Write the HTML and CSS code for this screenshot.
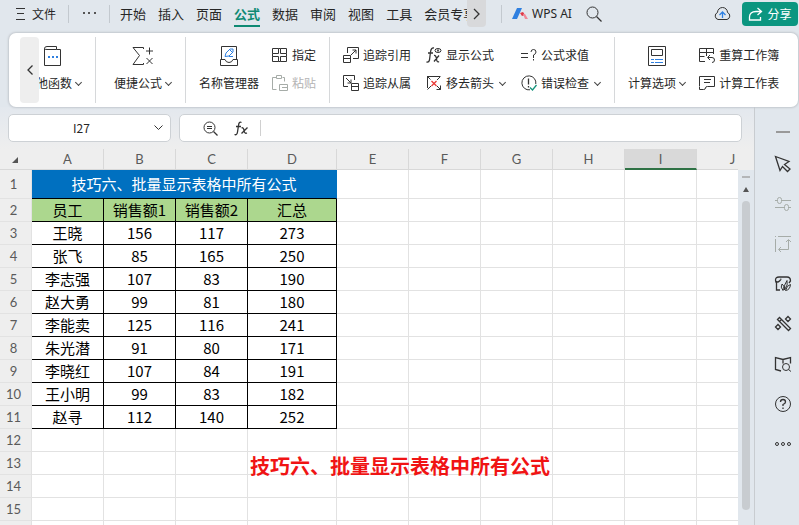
FILE: index.html
```
<!DOCTYPE html>
<html lang="zh-CN">
	<head>
		<meta charset="utf-8" />
		<meta name="viewport" content="width=device-width, initial-scale=1.0" />
		<title>WPS 表格</title>
		<link rel="stylesheet" href="styles.css">
	</head>
	<body>
		<header class="topbar">
			<button class="file">
				<svg width="9" height="12" viewBox="0 0 9 12"><path d="M0 .5h9M1 5.5h7M0 11.5h9" /></svg>
				<span>文件</span>
			</button>
			<span class="divider"></span>
			<button class="more" aria-label="更多">
				<svg width="13" height="3" viewBox="0 0 13 3"><path class="solid" d="M0 0h2v2H0zM5 0h2v2H5zM11 0h2v2h-2z" /></svg>
			</button>
			<span class="divider"></span>
			<nav class="tabs">
				<a href="#">开始</a>
				<a href="#">插入</a>
				<a href="#">页面</a>
				<a href="#" class="active">公式</a>
				<a href="#">数据</a>
				<a href="#">审阅</a>
				<a href="#">视图</a>
				<a href="#">工具</a>
				<a href="#">会员专享</a>
			</nav>
			<button class="tabs-next" aria-label="下一个">
				<svg width="7" height="12" viewBox="0 0 7 12"><path class="bold" d="M1 1l5 5-5 5" /></svg>
			</button>
			<span class="divider"></span>
			<button class="ai">
				<svg width="16" height="12" viewBox="0 0 16 12">
					<path class="solid-blue" d="M5 0h5L5 11H0z" />
					<path class="solid-red" d="M8 5l3-1 2 3-3 1z" />
					<path class="solid-pink" d="M11 6l2 0 3 5h-3z" />
				</svg>
				<span>WPS AI</span>
			</button>
			<button class="search" aria-label="搜索">
				<svg width="16" height="16" viewBox="0 0 16 16"><circle cx="6.5" cy="6.5" r="5.5" /><path class="bold" d="M10.500 10.500l5 5" /></svg>
			</button>
			<button class="cloud" aria-label="云同步">
				<svg width="17" height="14" viewBox="0 0 17 14">
					<path d="M4 12.500A3.700 3.700 0 0 1 3.500 5.500 5 5 0 0 1 13.500 5.500 3.700 3.700 0 0 1 13 12.500z" />
					<path class="blue bold" d="M8.500 11V6M5.500 8l3-3 3 3" />
				</svg>
			</button>
			<button class="share">
				<svg width="15" height="14" viewBox="0 0 15 14"><path class="bold" d="M9.500 1l4 3.500-4 3.500M13 4.500H8Q1.500 4.500 1.500 10M1.500 10v3h11v-3" /></svg>
				<span>分享</span>
			</button>
		</header>

		<section class="ribbon">
			<button class="ribbon-prev" aria-label="向左滚动">
				<svg width="6" height="10" viewBox="0 0 6 10"><path class="bold" d="M5.500.5L1 5l4.500 4.500" /></svg>
			</button>
			<div class="group first">
				<button class="tool-big">
					<svg width="20" height="20" viewBox="0 0 20 20">
						<path d="M1.500 2.500V19.500H17.500V3.500H13.500V.5H4Q1.500.5 1.500 2.500 1.500 3.500 4 3.500H13.500" />
						<path class="solid-blue" d="M5 10h2v2H5zM9 10h2v2H9zM13 10h2v2h-2z" />
					</svg>
					<span class="caret">其他函数</span>
				</button>
			</div>
			<div class="group second">
				<button class="tool-big">
					<svg width="20" height="20" viewBox="0 0 20 20">
						<path d="M10.500 3V1.500H0L6.500 9.500 0 18.500H10.500V17M16.500 1.500v7M13 5h7M13.500 12l6 6M19.500 12l-6 6" />
					</svg>
					<span class="caret">便捷公式</span>
				</button>
			</div>
			<div class="group">
				<button class="tool-big">
					<svg width="20" height="20" viewBox="0 0 20 20">
						<path d="M2.500 13.500V.5H17.500V13.500M1.500 13.500H6Q7 16.500 10 16.500T14 13.500H18.500V19.500H1.500z" />
						<path class="blue" d="M6 10.500l1-3.500 4-4h3v3l-4 4zM11 4l2 2M10 10.500h4" />
					</svg>
					<span>名称管理器</span>
				</button>
				<div class="tool-grid">
					<button class="tool">
						<svg width="16" height="16" viewBox="0 0 16 16">
							<path d="M.5 1.500h6v5h-6zM8.500 1.500h6v5h-6zM.5 9.500h6v5h-6zM6.500 1.500h2M.5 6.500v3M8.500 9.500h6v5h-6zM6.500 14.500h2M14.500 6.500v3" />
						</svg>
						<span>指定</span>
					</button>
					<button class="tool" disabled>
						<svg width="16" height="16" viewBox="0 0 16 16">
							<path d="M4.500 2.500H.5v12h4M10.500 2.500h2v4M4.500.5h5v3h-5zM7.500 9.500h8v6h-8zM10 12.500h5" />
						</svg>
						<span>粘贴</span>
					</button>
				</div>
			</div>
			<div class="group">
				<div class="tool-grid three">
					<button class="tool">
						<svg width="16" height="16" viewBox="0 0 16 16">
							<path d="M4.500 6V.5h11v11H10M.5 8.500h7v7h-7zM.5 11.500h7M8 8l5-5M9.500 3H13v3.500" />
						</svg>
						<span>追踪引用</span>
					</button>
					<button class="tool">
						<svg width="16" height="16" viewBox="0 0 16 16">
							<path class="bold" d="M8 1Q5 .5 4.500 5L3.500 13Q3 15.500.5 15M2 6h5M8 8.500Q10 8 10.500 12T13 14.500M13 8.500L8 14.500" />
							<ellipse cx="12" cy="3.500" rx="3" ry="2" /><path class="solid" d="M11 2.500h2v2h-2z" />
						</svg>
						<span>显示公式</span>
					</button>
					<button class="tool">
						<svg width="16" height="16" viewBox="0 0 16 16">
							<path d="M0 6.500h7M0 10.500h7M10 5Q10 2.500 12.500 2.500T15 5Q15 7 12.500 8V11M12.500 12v1.500" />
						</svg>
						<span>公式求值</span>
					</button>
					<button class="tool">
						<svg width="16" height="16" viewBox="0 0 16 16">
							<path d="M5 11.500H.5V.5h11V5M8.500 8.500h7v7h-7zM8.500 11.500h7M3 3l5 5M8 4.500V8H4.500" />
						</svg>
						<span>追踪从属</span>
					</button>
					<button class="tool">
						<svg width="16" height="16" viewBox="0 0 16 16">
							<path d="M1.500 13V1.500H14M1 1l3.500 3.500M14.500 1.500L11 5M1.500 14.500L5 11M11 11l3.500 3.500M14.500 10.500v4H10.500" />
							<path class="red bold" d="M5.500 6l5 5M10.500 6l-5 5" />
						</svg>
						<span class="caret">移去箭头</span>
					</button>
					<button class="tool">
						<svg width="16" height="16" viewBox="0 0 16 16">
							<path d="M9 14.800A7 7 0 1 1 14.800 9" />
							<path class="bold" d="M7.500 3.500v6M7.500 11v1.500" />
							<path class="green bold" d="M9 12.500l2.500 2.500 4-5" />
						</svg>
						<span class="caret">错误检查</span>
					</button>
				</div>
			</div>
			<div class="group">
				<button class="tool-big">
					<svg width="20" height="20" viewBox="0 0 20 20">
						<path d="M1.500.5h17v19h-17zM4.500 3.500h11v6h-11z" />
						<path class="blue" d="M4 13.500h3M8 13.500h8M4 16.500h3M8 16.500h8" />
					</svg>
					<span class="caret">计算选项</span>
				</button>
				<div class="tool-grid">
					<button class="tool">
						<svg width="16" height="16" viewBox="0 0 16 16">
							<path d="M6 14.500H.5v-13h14V7M.5 5.500h14M7.500 1.500V9M.5 9.500h5M9 10.500h4q2.500 0 2.500 2.500T13 15.500M11 8L8.500 10.500 11 13" />
						</svg>
						<span>重算工作簿</span>
					</button>
					<button class="tool">
						<svg width="16" height="16" viewBox="0 0 16 16">
							<path d="M.5 11V1.500h15v10H8.500Q6.500 11.500 6.500 13T4.500 14.500H.5V11.500M5 4.500h7M5 7.500h6" />
						</svg>
						<span>计算工作表</span>
					</button>
				</div>
			</div>
		</section>

		<main class="workspace">
			<div class="editor">
				<div class="formula-bar">
					<div class="name-box">
						<input type="text" value="I27" aria-label="名称框" />
						<svg width="9" height="6" viewBox="0 0 9 6"><path d="M.5.5l4 4 4-4" /></svg>
					</div>
					<div class="formula-box">
						<button aria-label="缩小">
							<svg width="15" height="15" viewBox="0 0 15 15"><circle cx="6.500" cy="6.500" r="5.500" /><path class="bold" d="M10.500 10.500l4 4" /><path d="M4 5.500h5M4 7.500h5" /></svg>
						</button>
						<button aria-label="插入函数">
							<svg width="14" height="15" viewBox="0 0 14 15"><path class="bold" d="M7.500 1.500Q5 0 4.500 4.500L3.500 11Q3 14.500.5 13.500M2 5.500h5M7.500 7q2-1 2.500 2.500t3 2.500M13.500 6.500l-6 6" /></svg>
						</button>
						<input type="text" aria-label="公式" />
					</div>
				</div>
				<div class="sheet-area">
					<div class="sheet">
						<table>
							<colgroup>
								<col class="col-index" /><col /><col /><col /><col class="col-wide" /><col /><col /><col /><col /><col /><col />
							</colgroup>
							<thead>
								<tr>
									<th class="corner"><svg width="6" height="6" viewBox="0 0 6 6"><path class="solid" d="M6 0v6H0z" /></svg></th>
									<th>A</th><th>B</th><th>C</th><th>D</th><th>E</th><th>F</th><th>G</th><th>H</th><th class="selected">I</th><th>J</th>
								</tr>
							</thead>
							<tbody>
								<tr class="title"><th>1</th><td colspan="4">技巧六、批量显示表格中所有公式</td><td></td><td></td><td></td><td></td><td></td><td></td></tr>
								<tr class="head"><th>2</th><td>员工</td><td>销售额1</td><td>销售额2</td><td>汇总</td><td></td><td></td><td></td><td></td><td></td><td></td></tr>
								<tr class="data"><th>3</th><td>王晓</td><td>156</td><td>117</td><td>273</td><td></td><td></td><td></td><td></td><td></td><td></td></tr>
								<tr class="data"><th>4</th><td>张飞</td><td>85</td><td>165</td><td>250</td><td></td><td></td><td></td><td></td><td></td><td></td></tr>
								<tr class="data"><th>5</th><td>李志强</td><td>107</td><td>83</td><td>190</td><td></td><td></td><td></td><td></td><td></td><td></td></tr>
								<tr class="data"><th>6</th><td>赵大勇</td><td>99</td><td>81</td><td>180</td><td></td><td></td><td></td><td></td><td></td><td></td></tr>
								<tr class="data"><th>7</th><td>李能卖</td><td>125</td><td>116</td><td>241</td><td></td><td></td><td></td><td></td><td></td><td></td></tr>
								<tr class="data"><th>8</th><td>朱光潜</td><td>91</td><td>80</td><td>171</td><td></td><td></td><td></td><td></td><td></td><td></td></tr>
								<tr class="data"><th>9</th><td>李晓红</td><td>107</td><td>84</td><td>191</td><td></td><td></td><td></td><td></td><td></td><td></td></tr>
								<tr class="data"><th>10</th><td>王小明</td><td>99</td><td>83</td><td>182</td><td></td><td></td><td></td><td></td><td></td><td></td></tr>
								<tr class="data"><th>11</th><td>赵寻</td><td>112</td><td>140</td><td>252</td><td></td><td></td><td></td><td></td><td></td><td></td></tr>
								<tr><th>12</th><td></td><td></td><td></td><td></td><td></td><td></td><td></td><td></td><td></td><td></td></tr>
								<tr><th>13</th><td></td><td></td><td></td><td></td><td></td><td></td><td></td><td></td><td></td><td></td></tr>
								<tr><th>14</th><td></td><td></td><td></td><td></td><td></td><td></td><td></td><td></td><td></td><td></td></tr>
								<tr><th>15</th><td></td><td></td><td></td><td></td><td></td><td></td><td></td><td></td><td></td><td></td></tr>
								<tr><th></th><td></td><td></td><td></td><td></td><td></td><td></td><td></td><td></td><td></td><td></td></tr>
							</tbody>
						</table>
						<p class="subtitle">技巧六、批量显示表格中所有公式</p>
					</div>
					<div class="scrollbar">
						<span class="split"></span>
						<svg width="6" height="5" viewBox="0 0 6 5"><path class="solid" d="M3 0l3 5H0z" /></svg>
						<span class="thumb"></span>
					</div>
				</div>
			</div>
			<aside class="sidebar">
				<button class="collapse" aria-label="收起"><svg width="16" height="16" viewBox="0 0 16 16"><path class="muted-bar" d="M1 8h14" /></svg></button>
				<button aria-label="选择"><svg width="16" height="16" viewBox="0 0 16 16"><path class="bold" d="M.5.5l13.500 5-4.500 3 5.500 4.500-2.500 2.500-5-5-2.500 4z" /></svg></button>
				<button aria-label="属性" disabled><svg width="16" height="16" viewBox="0 0 16 16"><path d="M0 4.500h2.500M6.500 4.500H16M0 11.500h9.500M13.500 11.500H16" /><rect x="2.500" y="1.500" width="4" height="6" rx="2" /><rect x="9.500" y="8.500" width="4" height="6" rx="2" /></svg></button>
				<button aria-label="转置" disabled><svg width="16" height="16" viewBox="0 0 16 16"><path d="M3 .5h13M.5 3v13M0 .5h1M13.500 4v9.500H4M11 6l2.500-2.500L16 6M6 11l-2.500 2.500L6 16" /></svg></button>
				<button aria-label="风格"><svg width="16" height="16" viewBox="0 0 16 16"><path class="bold" d="M5 14H1.500V7Q.5 6 .5 4 .5 1 4 1h8q3.500 0 3.500 4l-1.500 2M.5 5q2 2 4 0t1-2" /><path d="M8 14.500Q5 11 7 8q3 2 1 6.500zM9.500 14Q8.500 9 12 4.500q1.500 4-2.500 9.500zM10.500 14.500Q12 9 15.500 8.500 15 14 10.500 14.500z" /></svg></button>
				<button aria-label="工具"><svg width="16" height="16" viewBox="0 0 16 16"><path class="bold" d="M2.500 3.500l2-2L15.500 12.500l-2 2zM4.500 5.500l2-2" /><path class="bold" d="M13 .5L15.500 3 13 5.500 10.500 3zM3 8.500l2.500 2.500L3 13.500.5 11z" /></svg></button>
				<button aria-label="查找"><svg width="16" height="16" viewBox="0 0 16 16"><path class="bold" d="M6 15l-5.500-1.500V1.500L8 3.500l7.500-2v6M8 3.500v4" /><circle cx="11" cy="11" r="3.500" /><path d="M13.500 13.500l2.500 2" /></svg></button>
				<button aria-label="帮助"><svg width="16" height="16" viewBox="0 0 16 16"><circle cx="8" cy="8" r="7.500" /><path class="bold" d="M5.500 6Q5.500 3.500 8 3.500T10.500 6Q10.500 7.500 8 8.500V10M8 11.500V13" /></svg></button>
				<button aria-label="更多"><svg width="16" height="16" viewBox="0 0 16 16"><circle cx="2" cy="8" r="1.500" /><circle cx="8" cy="8" r="1.500" /><circle cx="14" cy="8" r="1.500" /></svg></button>
			</aside>
		</main>
	</body>
</html>
```
FILE: styles.css
```
* {
	box-sizing: border-box;
}

body {
	display: flex;
	flex-direction: column;
	height: 100vh;
	margin: 0;
	overflow: hidden;
	background: #e1e7ed;
	color: #262626;
	font-family: 'Noto Sans CJK SC', sans-serif;
	font-size: 12px;
	line-height: 18px;
}

button {
	display: flex;
	align-items: center;
	justify-content: center;
	flex: none;
	border: none;
	background: none;
	color: inherit;
	font: inherit;
	padding: 0;
	white-space: nowrap;
	cursor: pointer;
}

input {
	border: none;
	outline: none;
	background: none;
	color: inherit;
	font: inherit;
	padding: 0;
	min-width: 0;
}

svg {
	display: block;
	flex: none;
	fill: none;
	stroke: #333333;
	overflow: visible;
}

.bold {
	stroke-width: 1.3;
}

.blue {
	stroke: #2f80e0;
}

.red {
	stroke: #e83a36;
}

.green {
	stroke: #16947c;
}

.solid,
.solid-blue,
.solid-red,
.solid-pink {
	fill: #555555;
	stroke: none;
}

.solid-blue {
	fill: #2f80e0;
}

.solid-red {
	fill: #e03a48;
}

.solid-pink {
	fill: #f08a98;
}

/* top bar */
.topbar {
	display: flex;
	align-items: center;
	flex: none;
	height: 27px;
	padding: 0 1px 0 16px;
}

.divider {
	flex: none;
	width: 1px;
	height: 18px;
	background: #c3c9cf;
}

.file {
	gap: 7px;
	margin-right: 12px;
}

.more {
	margin: 0 13px 0 14px;
}

.tabs {
	display: flex;
	flex: 0 1 357px;
	gap: 12px;
	min-width: 0;
	overflow: hidden;
	padding-left: 10px;
	font-size: 13px;
}

.tabs a {
	flex: none;
	height: 27px;
	color: inherit;
	line-height: 27px;
	text-decoration: none;
}

.tabs .active {
	border-bottom: 2px solid #0f8a74;
	color: #0f8a74;
	font-weight: 700;
}

.tabs-next {
	width: 19px;
	height: 27px;
	margin-right: 15px;
	border-radius: 0 0 4px 4px;
	background: #d8d9db;
}

.ai {
	gap: 4px;
	margin: 0 14px 0 10px;
	font-family: 'Noto Sans', sans-serif;
}

.cloud {
	margin-left: auto;
}

.share {
	gap: 4px;
	width: 56px;
	height: 24px;
	margin-left: 11px;
	border-radius: 4px;
	background: #0b9680;
	color: #ffffff;
}

.share svg {
	stroke: #ffffff;
}

/* ribbon */
.ribbon {
	position: relative;
	display: flex;
	flex: none;
	height: 74px;
	margin: 6px 1px 0 9px;
	padding: 4px 0;
	border-radius: 7px;
	background: #ffffff;
	box-shadow: 0 0 2px 1px #c3c8ce;
}

.ribbon-prev {
	position: absolute;
	top: 4px;
	left: 11px;
	width: 19px;
	height: 66px;
	border-radius: 4px;
	background: #eeeeee;
}

.group {
	display: flex;
	flex: none;
	gap: 13px;
	padding: 4px 13px;
}

.group:not(:last-child) {
	border-right: 1px solid #d6d8da;
}

.first {
	padding-left: 15px;
}

.second {
	padding-left: 18px;
}

.tool-big {
	flex-direction: column;
	justify-content: space-between;
	padding: 5px 0 7px;
}

.tool-grid {
	display: grid;
	grid-template-columns: auto;
	grid-auto-rows: 28px;
}

.three {
	grid-template-columns: auto auto auto;
	column-gap: 15px;
}

.tool {
	gap: 4px;
	justify-content: flex-start;
}

.tool:disabled {
	color: #b4b4b4;
	cursor: default;
}

button:disabled svg {
	stroke: #a6aca8;
}

.caret {
	display: flex;
	align-items: center;
}

.caret::after {
	content: '';
	width: 4px;
	height: 4px;
	margin: 0 1px 2px 4px;
	border: solid #444444;
	border-width: 0 1px 1px 0;
	transform: rotate(45deg);
}

.tool .caret::after {
	margin-left: 6px;
}

/* formula bar */
.workspace {
	display: flex;
	flex: 1;
	min-height: 0;
}

.editor {
	display: flex;
	flex: 1;
	flex-direction: column;
	min-width: 0;
	background: linear-gradient(#e3e8ee, #eeeeee 42px);
}

.formula-bar {
	display: flex;
	flex: none;
	gap: 8px;
	height: 42px;
	padding: 7px 12px 7px 8px;
}

.name-box,
.formula-box {
	display: flex;
	align-items: center;
	border: 1px solid #cdd1d5;
	border-radius: 5px;
	background: #ffffff;
}

.name-box {
	width: 163px;
	padding-right: 7px;
}

.name-box input {
	flex: 1;
	text-align: center;
}

.formula-box {
	flex: 1;
	gap: 16px;
	padding-left: 23px;
}

.formula-box input {
	flex: 1;
	height: 16px;
	margin-left: -4px;
	border-left: 1px solid #d0d0d0;
}

/* sheet */
.sheet-area {
	display: flex;
	flex: 1;
	min-height: 0;
}

.sheet {
	position: relative;
	flex: 1;
	min-width: 0;
	overflow: hidden;
}

table {
	width: 769px;
	border-spacing: 0;
	table-layout: fixed;
}

col {
	width: 72px;
}

.col-index {
	width: 32px;
}

.col-wide {
	width: 89px;
}

th,
td {
	height: 23px;
	padding: 0;
	border: solid #e2e2e2;
	border-width: 0 1px 1px 0;
	text-align: center;
	line-height: 20px;
}

th {
	background: #eeeeee;
	color: #5a5a5a;
	font-family: Lato, sans-serif;
	font-size: 13px;
	font-weight: 400;
}

tbody th {
	padding-right: 4px;
}

thead th {
	height: 21px;
	border-color: #d8d8d8;
	line-height: 18px;
}

thead .corner {
	padding: 2px 0 0 12px;
	border-right: none;
}

thead .selected {
	border-bottom: 2px solid #2f7245;
	background: #d9d9d9;
}

td {
	background: #ffffff;
	color: #000000;
	font-size: 15px;
}

.title > * {
	height: 29px;
}

.title td[colspan] {
	border-color: #0070c0;
	border-bottom-color: #000000;
	background: #0070c0;
	color: #ffffff;
}

.head td:nth-child(-n + 5),
.data td:nth-child(-n + 5) {
	border-color: #000000;
}

.head td:nth-child(-n + 5) {
	background: #acd78e;
}

.subtitle {
	position: absolute;
	top: 303px;
	left: 250px;
	margin: 0;
	color: #f01414;
	font-size: 20px;
	font-weight: 700;
	line-height: 28px;
	white-space: nowrap;
}

.scrollbar {
	display: flex;
	flex-direction: column;
	align-items: center;
	flex: none;
	width: 16px;
	margin-top: 21px;
	padding-bottom: 15px;
	background: #e1e7ed;
}

.split {
	width: 8px;
	height: 2px;
	margin: 6px 0 9px;
	background: #b4b6b8;
}

.thumb {
	flex: 1;
	width: 8px;
	margin-top: 9px;
	border-radius: 4px;
	background: #c8ccd0;
}

/* sidebar */
.sidebar {
	display: flex;
	flex-direction: column;
	align-items: center;
	flex: none;
	width: 45px;
	padding: 13px 0 0 11px;
	border-left: 1px solid #c8ccd0;
	background: #e1e7ed;
}

.sidebar button {
	width: 24px;
	height: 40px;
}

.sidebar .collapse {
	height: 24px;
}

.muted-bar {
	stroke: #999999;
	stroke-width: 2;
}
```
